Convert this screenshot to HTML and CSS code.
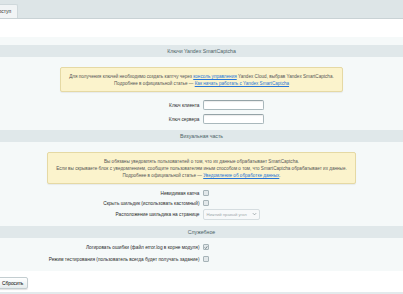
FILE: index.html
```html
<!DOCTYPE html>
<html lang="ru">
<head>
    <meta charset="UTF-8">
    <title>Настройки модуля</title>
    <link rel="stylesheet" href="styles.css">
</head>
<body>
    <div class="tabs">
        <div class="tab">Доступ</div>
    </div>
    <div class="tab-body">
        <div class="edit-table">
            <div class="heading">Ключи Yandex SmartCaptcha</div>
            <div class="section first">
                <div class="notice-wrap">
                    <div class="notice">
                        Для получения ключей необходимо создать каптчу через <a href="#">консоль управления</a> Yandex Cloud, выбрав Yandex SmartCaptcha.<br>
                        Подробнее в официальной статье — <a href="#">Как начать работать с Yandex SmartCaptcha</a>
                    </div>
                </div>
                <div class="row field">
                    <label class="label">Ключ клиента</label>
                    <div class="control"><span class="input"></span></div>
                </div>
                <div class="row field">
                    <label class="label">Ключ сервера</label>
                    <div class="control"><span class="input"></span></div>
                </div>
            </div>

            <div class="heading">Визуальная часть</div>
            <div class="section second">
                <div class="notice-wrap">
                    <div class="notice">
                        Вы обязаны уведомлять пользователей о том, что их данные обрабатывает SmartCaptcha.<br>
                        Если вы скрываете блок с уведомлением, сообщите пользователям иным способом о том, что SmartCaptcha обрабатывает их данные.<br>
                        Подробнее в официальной статье — <a href="#">Уведомление об обработке данных</a>.
                    </div>
                </div>
                <div class="row check-row">
                    <label class="label">Невидимая капча</label>
                    <div class="control"><span class="check"></span></div>
                </div>
                <div class="row check-row">
                    <label class="label">Скрыть шильдик (использовать кастомный)</label>
                    <div class="control"><span class="check"></span></div>
                </div>
                <div class="row select-row">
                    <label class="label">Расположение шильдика на странице</label>
                    <div class="control">
                        <span class="select">
                            <span class="select-text">Нижний правый угол</span>
                            <svg class="arrow" viewBox="0 0 6 4" width="5" height="4"><polyline points="1,1 3,3 5,1" fill="none" stroke="#8a9598" stroke-width="0.9"/></svg>
                        </span>
                    </div>
                </div>
            </div>

            <div class="heading">Служебное</div>
            <div class="section third">
                <div class="row log-row">
                    <label class="label">Логировать ошибки (файл error.log в корне модуля)</label>
                    <div class="control">
                        <span class="check checked">
                            <svg viewBox="0 0 6 6" width="5" height="5"><polyline points="1,3 2.5,4.5 5,1.2" fill="none" stroke="#4f5e63" stroke-width="1"/></svg>
                        </span>
                    </div>
                </div>
                <div class="row log-row">
                    <label class="label">Режим тестирования (пользователь всегда будет получать задание)</label>
                    <div class="control"><span class="check"></span></div>
                </div>
            </div>
        </div>
        <div class="buttons">
            <span class="button">Сбросить</span>
        </div>
    </div>
    <div class="bottom-line"></div>
</body>
</html>
```

FILE: styles.css
```css
body {
    margin: 0;
    font-family: "Liberation Sans", Arial, sans-serif;
    font-size: 4.75px;
    color: #333;
    background-color: #fff;
    overflow: hidden;
}

.tabs {
    height: 18px;
    background-color: #dde5e7;
    border-bottom: 1px solid #c9d2d5;
    display: flex;
    align-items: flex-end;
}

.tab {
    height: 14px;
    line-height: 13px;
    margin-left: -10px;
    padding: 0 6px 0 4px;
    background-color: #f1f4f5;
    border: 1px solid #cfd8db;
    border-bottom: none;
    border-radius: 2px 2px 0 0;
    box-sizing: border-box;
    font-size: 5px;
    color: #333;
}

.tab-body {
    padding-top: 18px;
}

.edit-table {
    background-color: #f5f9f9;
    padding-top: 8px;
}

.heading {
    height: 12px;
    line-height: 12px;
    text-align: center;
    background-color: #e0e8ea;
    color: #4b6267;
    font-size: 5.2px;
}

.section.first {
    padding: 10px 0 4px;
}

.section.second {
    padding: 10px 0 6px;
}

.section.third {
    padding: 3px 0 6px;
}

.notice-wrap {
    text-align: center;
}

.notice {
    display: inline-block;
    padding: 4.5px 8px;
    font-size: 4.62px;
    line-height: 7px;
    background-color: #fbf3cc;
    border: 1px solid #e5d9a4;
    border-radius: 2px;
    box-shadow: 0 1px 1px rgba(0, 0, 0, 0.06);
    color: #555;
    white-space: nowrap;
}

.notice a {
    color: #2675d7;
}

.first .notice-wrap {
    margin-bottom: 6px;
}

.second .notice-wrap {
    margin-bottom: 4px;
}

.row {
    display: grid;
    grid-template-columns: 50% 50%;
    align-items: center;
}

.row .label {
    text-align: right;
    padding-right: 2px;
    color: #2b2b2b;
}

.row .control {
    padding-left: 1px;
    display: flex;
    align-items: center;
}

.field {
    height: 14px;
}

.check-row {
    height: 10px;
}

.select-row {
    height: 12px;
}

.log-row {
    height: 12px;
}

.input {
    display: block;
    width: 61px;
    height: 10px;
    box-sizing: border-box;
    background-color: #fff;
    border: 1px solid #a9b8bc;
    border-top-color: #95a3a7;
    border-radius: 2px;
    box-shadow: inset 0 1px 1px rgba(0, 0, 0, 0.08);
}

.check {
    display: flex;
    align-items: center;
    justify-content: center;
    width: 6px;
    height: 6px;
    box-sizing: border-box;
    background-color: #e2e8ea;
    border: 1px solid #a6b3b7;
    border-radius: 1px;
}

.check svg {
    display: block;
}

.select {
    display: flex;
    align-items: center;
    justify-content: space-between;
    width: 57px;
    height: 11px;
    box-sizing: border-box;
    padding: 0 2px 0 3px;
    background-color: #f7f9fa;
    border: 1px solid #d5dde0;
    border-radius: 2px;
    color: #a2abae;
    font-size: 4.2px;
    white-space: nowrap;
}

.buttons {
    padding: 6px 0 3px;
}

.button {
    display: inline-block;
    height: 12px;
    line-height: 11px;
    margin-left: -4px;
    padding: 0 4px 0 5px;
    box-sizing: border-box;
    background: linear-gradient(#ffffff, #e6eced);
    border: 1px solid #c3cdd0;
    border-radius: 2px;
    box-shadow: 0 1px 1px rgba(0, 0, 0, 0.12);
    font-size: 4.8px;
    color: #000;
}

.bottom-line {
    height: 3px;
    background-color: #e3eaec;
}
```
